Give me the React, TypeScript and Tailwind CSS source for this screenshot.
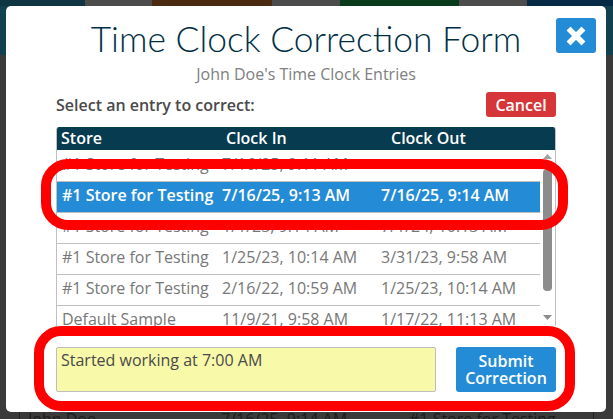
const rows = [
  { store: '#1 Store for Testing', clockIn: '7/16/25, 9:11 AM', clockOut: '' },
  { store: '#1 Store for Testing', clockIn: '7/16/25, 9:13 AM', clockOut: '7/16/25, 9:14 AM', selected: true },
  { store: '#1 Store for Testing', clockIn: '1/1/23, 9:14 AM', clockOut: '7/1/24, 10:13 AM' },
  { store: '#1 Store for Testing', clockIn: '1/25/23, 10:14 AM', clockOut: '3/31/23, 9:58 AM' },
  { store: '#1 Store for Testing', clockIn: '2/16/22, 10:59 AM', clockOut: '1/25/23, 10:14 AM' },
  { store: 'Default Sample', clockIn: '11/9/21, 9:58 AM', clockOut: '1/17/22, 11:13 AM' },
]

export default function App() {
  return (
    <div className="relative w-[613px] h-[419px] overflow-hidden bg-[#3a3a3a] font-['Open_Sans',sans-serif]">
      {/* Page behind the dialog */}
      <div className="flex h-[6px]">
        <div className="w-[85px] bg-[#0f3442]" />
        <div className="w-[67px] bg-[#4c4c4c]" />
        <div className="w-[120px] bg-[#4a2a10]" />
        <div className="w-[68px] bg-[#4c4c4c]" />
        <div className="w-[119px] bg-[#0a3a1c]" />
        <div className="w-[68px] bg-[#4c4c4c]" />
        <div className="flex-1 bg-[#062a45]" />
      </div>
      <div className="h-[49px] bg-[#12404e]" />
      <div className="absolute left-[19px] right-[19px] top-[407px] h-[12px] border-x border-[#222222] pl-[8px] text-base text-[#1c1c1c] flex">
        <span className="w-[193px]">John Doe</span>
        <span className="w-[188px]">7/16/25, 9:14 AM</span>
        <span>#1 Store for Testing</span>
      </div>

      {/* Dialog */}
      <div className="absolute left-[6px] top-[6px] w-[600px] h-[406px] bg-white rounded-[5px] px-[50px]">
        <h1 className="mt-[11px] text-center text-[35.4px] leading-[44px] font-light text-[#002f45] font-['Lato',sans-serif]">
          Time Clock Correction Form
        </h1>
        <p className="mt-[1px] text-center text-base leading-[24px] text-[#808080]">John Doe's Time Clock Entries</p>

        <div className="mt-[5px] h-[27px] flex items-center justify-between">
          <span className="text-base font-semibold text-[#4a4a4a]">Select an entry to correct:</span>
          <button className="w-[70px] h-[25px] rounded-[3px] bg-[#d63638] text-base font-semibold text-white">Cancel</button>
        </div>

        <div className="mt-[9px] h-[199px] flex flex-col rounded-t-[3px] overflow-hidden border-x border-[#c0c0c0]">
          <div className="-mx-px h-[23px] shrink-0 flex items-center pb-[2px] bg-[#073b4f] text-white text-base font-semibold">
            <span className="pl-[5px] w-[170px]">Store</span>
            <span className="w-[165px]">Clock In</span>
            <span>Clock Out</span>
          </div>
          <div className="flex flex-1 min-h-0 overflow-hidden">
            <div className="flex-1 min-w-0 overflow-hidden pt-px">
              {rows.map((row) => (
                <div
                  key={row.clockIn}
                  className={`h-[31px] flex items-center pb-[4px] border-b text-base whitespace-nowrap ${
                    row.selected
                      ? 'bg-[#248cd6] border-[#c0c0c0] text-white font-semibold'
                      : 'border-[#c0c0c0] text-[#777777]'
                  }`}
                >
                  <span className="pl-[5px] w-[165px]">{row.store}</span>
                  <span className="w-[159px]">{row.clockIn}</span>
                  <span>{row.clockOut}</span>
                </div>
              ))}
            </div>
            {/* Scrollbar */}
            <div className="w-[15px] shrink-0 flex flex-col items-center bg-white">
              <svg width="11" height="8" viewBox="0 0 11 8" className="mt-[3px]"><path d="M5.5 1 10 6H1z" fill="#a0a0a0" /></svg>
              <div className="mt-[8px] w-[9px] h-[122px] rounded-[4px] bg-[#8c8c8c]" />
              <svg width="11" height="8" viewBox="0 0 11 8" className="mt-auto mb-[4px]"><path d="M1 1h9L5.5 6z" fill="#8c8c8c" /></svg>
            </div>
          </div>
        </div>

        <div className="mt-[21px] flex justify-between">
          <textarea
            readOnly
            value="Started working at 7:00 AM"
            className="w-[380px] h-[45px] resize-none rounded-[2px] border border-[#bdbdbd] bg-[#f8f9a9] px-[4px] pt-[1px] pb-0 text-base leading-[22px] text-[#4a4a4a] outline-none"
          />
          <button className="w-[100px] h-[45px] rounded-[3px] bg-[#248cd6] text-base leading-[17px] font-semibold text-white">
            Submit
            <br />
            Correction
          </button>
        </div>

        <button className="absolute left-[550px] top-[12px] w-[40px] h-[35px] rounded-[3px] bg-[#248cd6] flex items-center justify-center">
          <svg width="22" height="22" viewBox="0 0 20 20">
            <path d="M5 2.2 10 7.2 15 2.2 17.8 5 12.8 10 17.8 15 15 17.8 10 12.8 5 17.8 2.2 15 7.2 10 2.2 5z" fill="white" stroke="white" strokeWidth="1" strokeLinejoin="round" />
          </svg>
        </button>
      </div>

      {/* Red annotation rings */}
      <div className="absolute left-[41px] top-[159px] w-[527px] h-[71px] rounded-[27px] border-[10px] border-[#ff0000]" />
      <div className="absolute left-[34px] top-[326px] w-[541px] h-[85px] rounded-[27px] border-[10px] border-[#ff0000]" />
    </div>
  )
}
